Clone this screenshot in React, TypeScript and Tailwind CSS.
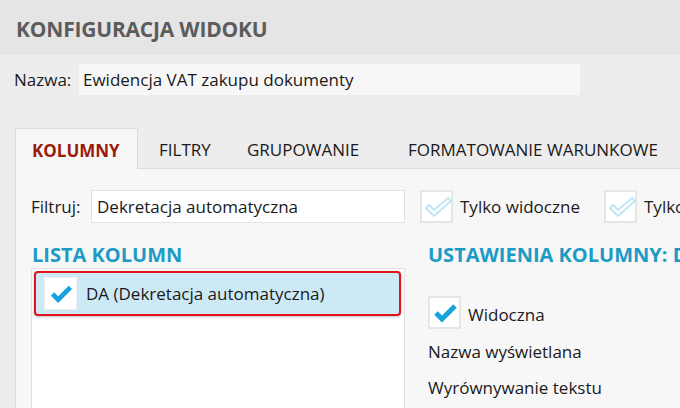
import React from 'react';

function Check({ hollow }: { hollow?: boolean }) {
    return (
        <svg width="33" height="33" viewBox="0 0 33 33" className="-m-[2px]">
            {hollow ? (
                <polygon
                    points="6,18 9,15 14,20 28,8 31,11 14,26"
                    fill="none"
                    stroke="#bfe6f6"
                    strokeWidth="2"
                    strokeLinejoin="miter"
                />
            ) : (
                <polyline points="8,17 14,23 27,10" fill="none" stroke="#17a2dc" strokeWidth="5" />
            )}
        </svg>
    );
}

function Checkbox({ checked }: { checked?: boolean }) {
    return (
        <div className="w-[33px] h-[33px] shrink-0 bg-white border-2 border-[#e6e6e6] flex items-center justify-center">
            <Check hollow={!checked} />
        </div>
    );
}

export default function App() {
    const font = { fontFamily: '"Open Sans", "Noto Sans", sans-serif' };

    return (
        <div className="w-[680px] h-[408px] overflow-hidden bg-[#ededed] text-[#1a1a1a] text-[17px] leading-[22px]" style={font}>
            {/* Header */}
            <header className="h-[55px] bg-[#e5e5e5] flex items-center pl-[16px] pt-[3px]">
                <h1 className="text-[21px] leading-[26px] font-bold text-[#5c5c5c] tracking-[-0.2px]">KONFIGURACJA WIDOKU</h1>
            </header>

            {/* Nazwa */}
            <div className="flex items-center mt-[9px] pl-[14px] h-[31px]">
                <span className="w-[65px] shrink-0">Nazwa:</span>
                <div className="w-[501px] h-[31px] shrink-0 bg-[#f7f7f7] flex items-center pl-[4px]">
                    Ewidencja VAT zakupu dokumenty
                </div>
            </div>

            {/* Tabs */}
            <div className="flex mt-[33px] pl-[15px] h-[41px]">
                <div className="w-[123px] h-[41px] shrink-0 bg-[#f7f7f7] border border-b-0 border-[#dcdcdc] flex items-center pl-[16px] pt-[3px] font-bold text-[#9a1b0c] relative z-10">
                    KOLUMNY
                </div>
                <div className="w-[88px] shrink-0 flex items-center pl-[21px] pt-[3px]">FILTRY</div>
                <div className="w-[161px] shrink-0 flex items-center pl-[21px] pt-[3px]">GRUPOWANIE</div>
                <div className="shrink-0 flex items-center pl-[21px] pt-[3px] whitespace-nowrap">FORMATOWANIE WARUNKOWE</div>
            </div>

            {/* Panel */}
            <div className="ml-[15px] -mt-px h-[240px] bg-[#f7f7f7] border-t border-l border-[#dcdcdc] pl-[15px]">
                {/* Filter row */}
                <div className="flex items-center mt-[21px] h-[33px]">
                    <span className="w-[60px] shrink-0">Filtruj:</span>
                    <div className="w-[314px] h-[33px] shrink-0 bg-white border border-[#e2e2e2] flex items-center pl-[5px]">
                        Dekretacja automatyczna
                    </div>
                    <div className="ml-[15px] shrink-0 flex items-center gap-[7px]">
                        <Checkbox />
                        <span className="w-[144px] whitespace-nowrap">Tylko widoczne</span>
                    </div>
                    <div className="shrink-0 flex items-center gap-[7px]">
                        <Checkbox />
                        <span className="whitespace-nowrap">Tylko zaznaczone</span>
                    </div>
                </div>

                <div className="flex mt-[19px]">
                    {/* Lista kolumn */}
                    <div className="w-[374px] shrink-0">
                        <h2 className="text-[20px] font-bold text-[#1b9bc5] leading-[25px] pl-[1px]">LISTA KOLUMN</h2>
                        <div className="mt-[1px] h-[200px] bg-white border border-[#e0e0e0] p-[2px]">
                            <div className="h-[45px] mr-[1px] rounded-[4px] border-2 border-[#e3121b] bg-[#cde9f6] flex items-center pl-[8px] shadow-[0_1px_3px_rgba(0,0,0,0.25)]">
                                <div className="w-[33px] h-[33px] bg-white border border-[#f0f0f0] flex items-center justify-center">
                                    <svg width="33" height="33" viewBox="0 0 33 33">
                                        <polyline points="8,17 14,23 27,10" fill="none" stroke="#17a2dc" strokeWidth="5" />
                                    </svg>
                                </div>
                                <span className="ml-[9px] whitespace-nowrap">DA (Dekretacja automatyczna)</span>
                            </div>
                        </div>
                    </div>

                    {/* Ustawienia kolumny */}
                    <div className="ml-[23px] flex flex-col">
                        <h2 className="text-[20px] font-bold text-[#1b9bc5] leading-[25px] whitespace-nowrap">USTAWIENIA KOLUMNY: DA</h2>
                        <div className="flex items-center gap-[7px] mt-[29px]">
                            <Checkbox checked />
                            <span className="pt-[5px]">Widoczna</span>
                        </div>
                        <div className="mt-[12px]">Nazwa wyświetlana</div>
                        <div className="mt-[14px]">Wyrównywanie tekstu</div>
                    </div>
                </div>
            </div>
        </div>
    );
}
